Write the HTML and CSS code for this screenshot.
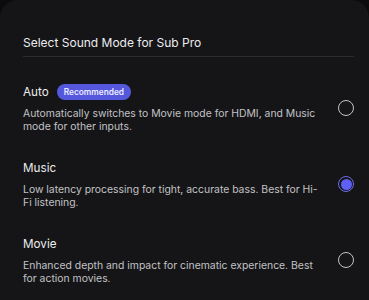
FILE: index.html
```html
<!DOCTYPE html>
<html lang="en">
<head>
  <meta charset="UTF-8" />
  <meta name="viewport" content="width=device-width, initial-scale=1.0" />
  <title>Sound Mode</title>
  <link rel="stylesheet" href="styles.css">
</head>
<body>
  <div class="sheet">
    <h1 class="sheet-title">Select Sound Mode for Sub Pro</h1>

    <div class="mode-list">
      <div class="mode">
        <div class="mode-text">
          <div class="mode-name">Auto <span class="badge">Recommended</span></div>
          <p class="mode-desc">Automatically switches to Movie mode for HDMI, and Music mode for other inputs.</p>
        </div>
        <span class="radio"></span>
      </div>

      <div class="mode">
        <div class="mode-text">
          <div class="mode-name">Music</div>
          <p class="mode-desc">Low latency processing for tight, accurate bass. Best for Hi-Fi listening.</p>
        </div>
        <span class="radio selected"></span>
      </div>

      <div class="mode">
        <div class="mode-text">
          <div class="mode-name">Movie</div>
          <p class="mode-desc">Enhanced depth and impact for cinematic experience. Best for action movies.</p>
        </div>
        <span class="radio"></span>
      </div>
    </div>
  </div>
</body>
</html>
```

FILE: styles.css
```css
:root {
  --page-bg: #0b0b0c;
  --sheet-bg: #151517;
  --text-main: #ececee;
  --text-soft: #c2c2c6;
  --divider: #2c2c30;
  --accent: #5558dc;
  --accent-bright: #5d60f2;
}

body {
  margin: 0;
  background-color: var(--page-bg);
  font-family: 'Inter', 'Noto Sans', sans-serif;
  color: var(--text-main);
}

.sheet {
  min-height: 300px;
  box-sizing: border-box;
  background-color: var(--sheet-bg);
  border-radius: 18px 18px 0 0;
  padding: 33px 15px 0 23px;
}

.sheet-title {
  margin: 0;
  padding-bottom: 3px;
  font-size: 12px;
  font-weight: 400;
  line-height: 20px;
  border-bottom: 1px solid var(--divider);
}

.mode-list {
  padding-top: 13px;
}

.mode {
  display: flex;
  align-items: center;
  gap: 12px;
  padding: 12px 0 13px;
}

.mode-text {
  flex: 1;
}

.mode-name {
  display: flex;
  align-items: center;
  gap: 8px;
  font-size: 11.7px;
  line-height: 20px;
}

.badge {
  padding: 0 7px;
  height: 16px;
  line-height: 16px;
  border-radius: 8px;
  background-color: var(--accent);
  color: #ececff;
  font-size: 8.3px;
  font-weight: 600;
}

.mode-desc {
  margin: 5px 0 0;
  font-size: 10.4px;
  line-height: 13px;
  color: var(--text-soft);
}

.radio {
  width: 16px;
  height: 16px;
  box-sizing: border-box;
  border: 1.5px solid #c4c4c8;
  border-radius: 50%;
  flex-shrink: 0;
}

.radio.selected {
  border-color: #6a6ce6;
  padding: 1.5px;
  background-clip: content-box;
  background-color: var(--accent-bright);
}
```
